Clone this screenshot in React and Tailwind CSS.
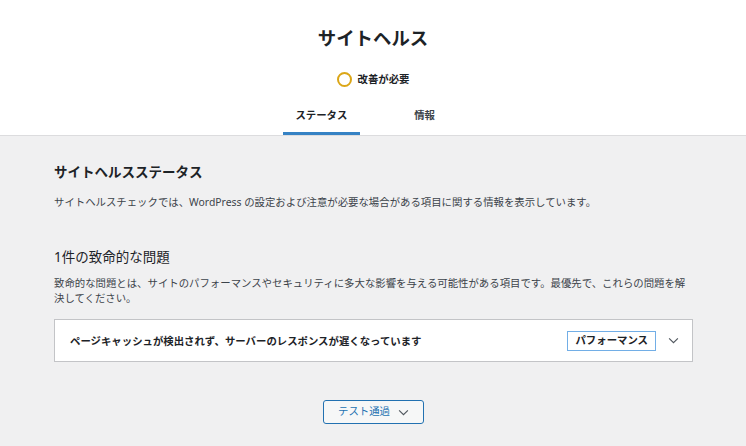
import React from 'react'

const font = { fontFamily: '"Noto Sans", "Noto Sans CJK JP", sans-serif' }

const Chevron = ({ className }) => (
    <svg viewBox="0 0 12 8" className={className} fill="none" stroke="currentColor" strokeWidth="1.3">
        <path d="M1 1.5 L6 6.5 L11 1.5" />
    </svg>
)

const App = () => {
    return (
        <div style={font} className="w-[746px] h-[446px] overflow-hidden bg-[#f0f0f1] text-[#1d2327]">

            <div className="bg-white border-b border-[#dcdcde] flex flex-col items-center">
                <h1 className="mt-[24px] text-[18.4px] leading-[28px] font-bold">
                    サイトヘルス
                </h1>

                <div className="mt-[19px] flex items-center gap-[6px] h-[16px]">
                    <span className="w-[15px] h-[15px] rounded-full border-2 border-[#dba617]" />
                    <span className="text-[10.4px] leading-[16px] font-bold">改善が必要</span>
                </div>

                <div className="mt-[17px] grid grid-cols-2 text-center">
                    <a className="mx-[12.8px] px-[12.8px] pt-[3px] pb-[12px] text-[10.4px] leading-[16px] font-bold shadow-[inset_0_-3px_0_#3582c4]">
                        ステータス
                    </a>
                    <a className="mx-[12.8px] px-[12.8px] pt-[3px] pb-[12px] text-[10.4px] leading-[16px] font-semibold text-[#3c434a]">
                        情報
                    </a>
                </div>
            </div>

            <div className="px-[54px] pr-[53px]">
                <h2 className="mt-[27px] text-[13.5px] leading-[18px] font-bold">
                    サイトヘルスステータス
                </h2>
                <p className="mt-[13px] text-[10.4px] leading-[16px] text-[#3c434a]">
                    サイトヘルスチェックでは、WordPress の設定および注意が必要な場合がある項目に関する情報を表示しています。
                </p>

                <h3 className="mt-[38px] text-[13.5px] leading-[18px] font-normal">
                    1件の致命的な問題
                </h3>
                <p className="mt-[10px] text-[10.4px] leading-[15px] text-[#3c434a]">
                    致命的な問題とは、サイトのパフォーマンスやセキュリティに多大な影響を与える可能性がある項目です。最優先で、これらの問題を解決してください。
                </p>

                <div className="mt-[13px] h-[43px] bg-white border border-[#c3c4c7] flex items-center pl-[15px] pr-[13px]">
                    <span className="flex-1 text-[10.4px] leading-[16px] font-bold">
                        ページキャッシュが検出されず、サーバーのレスポンスが遅くなっています
                    </span>
                    <span className="h-[20px] px-[7px] border border-[#72aee6] flex items-center text-[10.4px] font-bold">
                        パフォーマンス
                    </span>
                    <Chevron className="ml-[12px] w-[11px] h-[7px] text-[#50575e]" />
                </div>

                <div className="mt-[38px] flex justify-center">
                    <button
                        type="button"
                        className="w-[101px] h-[24px] rounded-[3px] border border-[#2271b1] bg-[#f6f7f7] text-[#2271b1] text-[10.4px] flex items-center justify-center gap-[8px]">
                        テスト通過
                        <Chevron className="w-[11px] h-[7px] text-[#50575e]" />
                    </button>
                </div>
            </div>
        </div>
    )
}

export default App
